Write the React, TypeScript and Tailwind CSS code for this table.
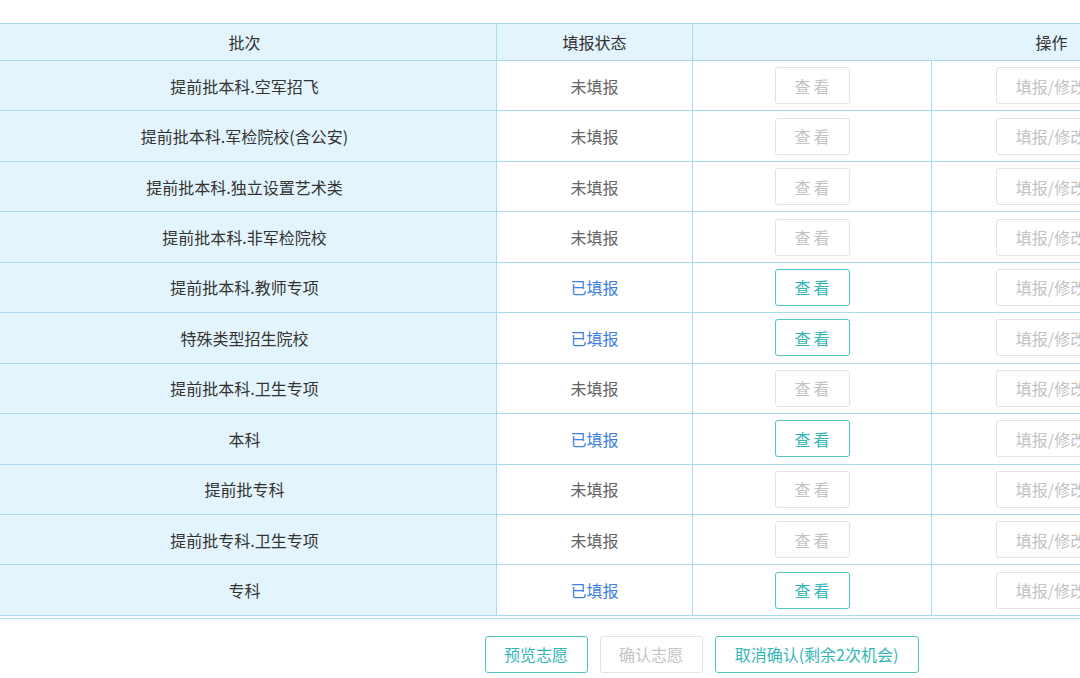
import React from 'react';

type Row = { name: string; done: boolean };

const rows: Row[] = [
  { name: '提前批本科.空军招飞', done: false },
  { name: '提前批本科.军检院校(含公安)', done: false },
  { name: '提前批本科.独立设置艺术类', done: false },
  { name: '提前批本科.非军检院校', done: false },
  { name: '提前批本科.教师专项', done: true },
  { name: '特殊类型招生院校', done: true },
  { name: '提前批本科.卫生专项', done: false },
  { name: '本科', done: true },
  { name: '提前批专科', done: false },
  { name: '提前批专科.卫生专项', done: false },
  { name: '专科', done: true },
];

const font = { fontFamily: '"Microsoft YaHei", "Noto Sans CJK SC", "Noto Sans", sans-serif' };

const App = () => {
  return (
    <div className="w-[1080px] h-[678px] overflow-hidden bg-white" style={font}>
      <div className="w-[1417px] ml-[-7px] pt-[23px]">
        {/* header */}
        <div className="flex h-[38px] border-y border-[#a9daf2] bg-[#e3f4fc] text-[16px] text-[#333]">
          <div className="w-[504px] flex items-center justify-center border-r border-[#a9daf2]">批次</div>
          <div className="w-[196px] flex items-center justify-center border-r border-[#a9daf2]">填报状态</div>
          <div className="flex-1 flex items-center justify-center">操作</div>
        </div>

        {/* body */}
        {rows.map((r) => (
          <div key={r.name} className="flex h-[50.45px] border-b border-[#a9daf2] text-[16px]">
            <div className="w-[504px] flex items-center justify-center bg-[#e3f4fc] border-r border-[#a9daf2] text-[#333]">
              {r.name}
            </div>
            <div
              className={
                r.done
                  ? 'w-[196px] flex items-center justify-center border-r border-[#a9daf2] text-[#3d7fe3]'
                  : 'w-[196px] flex items-center justify-center border-r border-[#a9daf2] text-[#666]'
              }
            >
              {r.done ? '已填报' : '未填报'}
            </div>
            <div className="w-[239px] flex items-center justify-center border-r border-[#a9daf2]">
              {r.done ? (
                <button className="w-[75px] h-[37px] rounded-[3px] border border-[#52c4c4] text-[#35b6b6] tracking-[3px] pl-[3px] bg-white">
                  查看
                </button>
              ) : (
                <button className="w-[75px] h-[37px] rounded-[3px] border border-[#e3e3e3] text-[#c3c3c3] tracking-[3px] pl-[3px] bg-white">
                  查看
                </button>
              )}
            </div>
            <div className="flex-1 flex items-center pl-[64px]">
              <button className="w-[110px] h-[37px] rounded-[3px] border border-[#e3e3e3] text-[#c3c3c3] bg-white">
                填报/修改
              </button>
            </div>
          </div>
        ))}
        <div className="mt-[2px] border-t border-[#b3e3ee]" />

        {/* footer buttons */}
        <div className="flex justify-center gap-[12px] mt-[17px] text-[16px]">
          <button className="w-[103px] h-[37px] rounded-[3px] border border-[#52c4c4] text-[#35b6b6] bg-white">
            预览志愿
          </button>
          <button className="w-[103px] h-[37px] rounded-[3px] border border-[#e3e3e3] text-[#c3c3c3] bg-white">
            确认志愿
          </button>
          <button className="w-[204px] h-[37px] rounded-[3px] border border-[#52c4c4] text-[#35b6b6] bg-white">
            取消确认(剩余2次机会)
          </button>
        </div>
      </div>
    </div>
  );
};

export default App;
